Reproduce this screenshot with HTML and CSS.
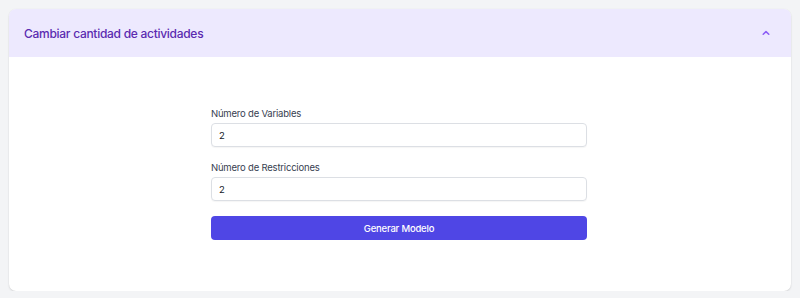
FILE: index.html
```html
<!DOCTYPE html>
<html lang="es">
<head>
<meta charset="utf-8">
<title>Cambiar cantidad de actividades</title>
<link rel="stylesheet" href="styles.css">
</head>
<body>
<section class="card">
  <header class="card-header">
    <h2 class="card-title">Cambiar cantidad de actividades</h2>
    <svg class="chevron" width="10" height="10" viewBox="0 0 10 10" aria-hidden="true">
      <path d="M2.2 6.3 L5 3.6 L7.8 6.3" fill="none" stroke="#8b5cf6" stroke-width="1.5" stroke-linecap="round" stroke-linejoin="round"/>
    </svg>
  </header>
  <div class="card-body">
    <form class="form">
      <label class="field">
        <span class="label">Número de Variables</span>
        <input class="input" type="number" value="2">
      </label>
      <label class="field">
        <span class="label">Número de Restricciones</span>
        <input class="input" type="number" value="2">
      </label>
      <button type="button" class="btn">Generar Modelo</button>
    </form>
  </div>
</section>
</body>
</html>
```

FILE: styles.css
```css
* { box-sizing: border-box; }
html, body { margin: 0; padding: 0; }
body {
  background: #f3f4f6;
  padding: 9px 9px 0 9px;
  font-family: Inter, "Noto Sans", sans-serif;
}
.card {
  background: #ffffff;
  border-radius: 7px;
  box-shadow: 0 1px 2px rgba(0,0,0,0.12), 0 0 1px rgba(0,0,0,0.08);
  overflow: hidden;
  height: 282px;
}
.card-header {
  background: #ede9fe;
  height: 48px;
  display: flex;
  align-items: center;
  justify-content: space-between;
  padding: 0 20px 0 15px;
}
.card-title {
  margin: 0;
  font-size: 12px;
  font-weight: 500;
  letter-spacing: -0.28px;
  color: #5b2bb0;
}
.chevron { display: block; }
.card-body {
  padding: 50px 0 0 0;
}
.form {
  width: 376px;
  margin: 0 auto 0 202px;
  display: flex;
  flex-direction: column;
}
.field {
  display: flex;
  flex-direction: column;
  margin-bottom: 14px;
}
.label {
  font-size: 9.5px;
  line-height: 13px;
  letter-spacing: -0.2px;
  color: #374151;
  margin-bottom: 3px;
}
.input {
  height: 24px;
  border: 1px solid #dcdfe4;
  border-radius: 4px;
  padding: 0 7px;
  font-family: inherit;
  font-size: 9.5px;
  color: #111827;
  background: #fff;
  box-shadow: 0 1px 1px rgba(0,0,0,0.04);
  -moz-appearance: textfield;
}
.input::-webkit-outer-spin-button,
.input::-webkit-inner-spin-button { -webkit-appearance: none; margin: 0; }
.btn {
  margin-top: 1px;
  height: 24px;
  border: none;
  border-radius: 4px;
  background: #4f46e5;
  color: #ffffff;
  font-family: inherit;
  font-size: 9.5px;
  letter-spacing: -0.2px;
  font-weight: 500;
}
```
